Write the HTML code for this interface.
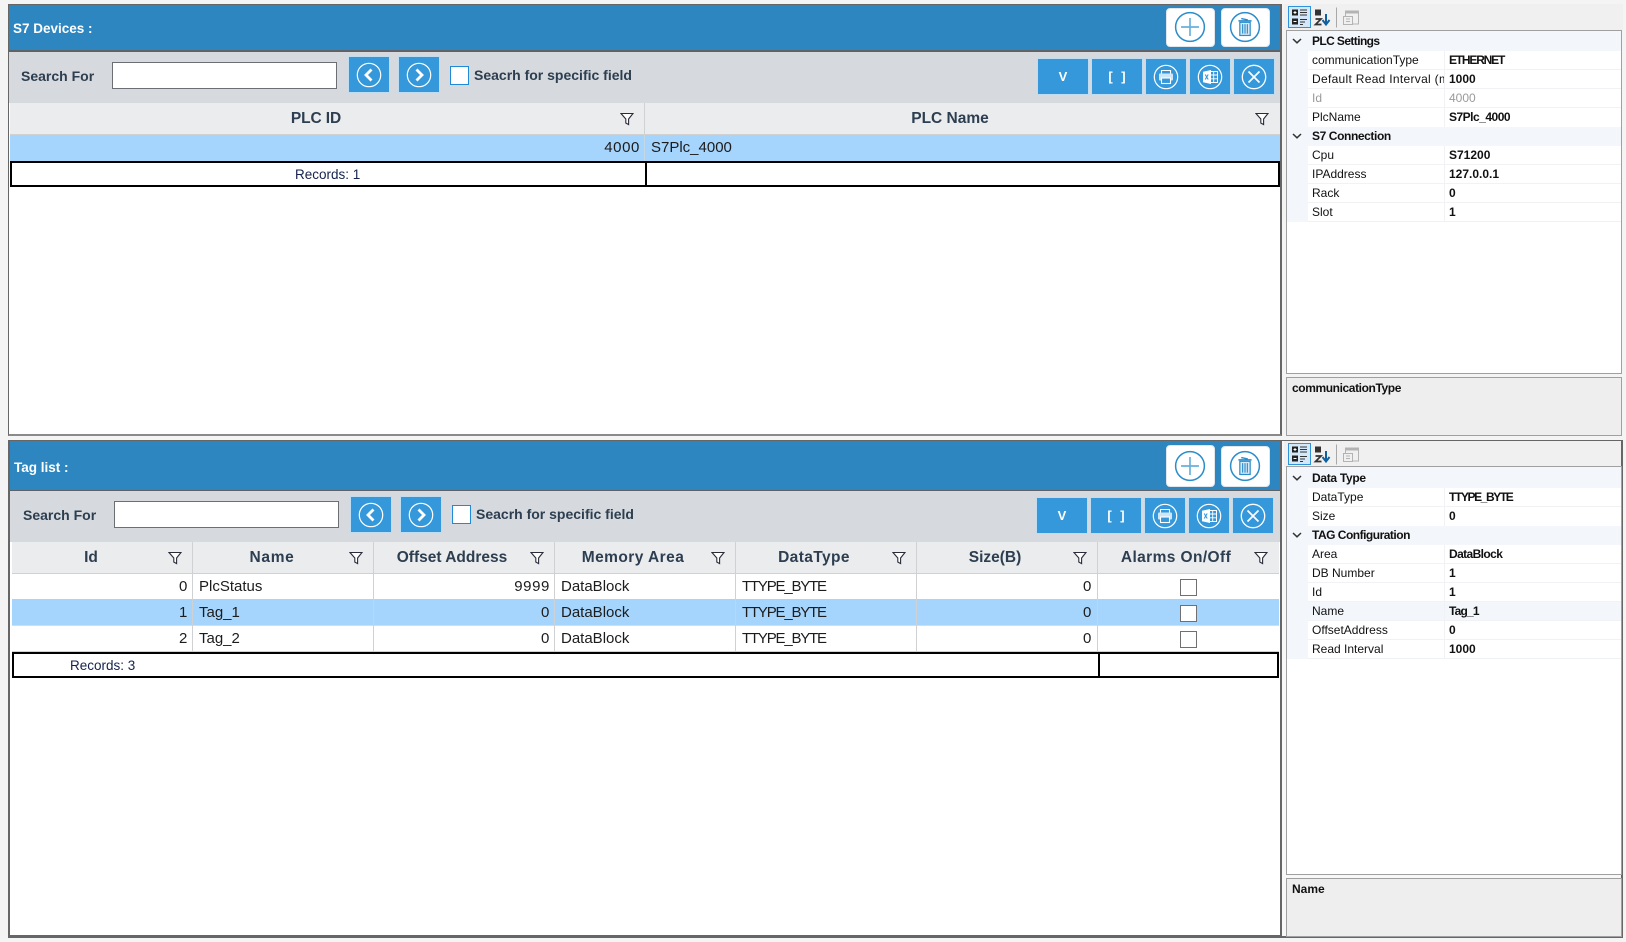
<!DOCTYPE html>
<html><head><meta charset="utf-8"><title>S7 Devices</title>
<style>
html,body{margin:0;padding:0}
body{position:relative;width:1626px;height:942px;overflow:hidden;background:#f4f4f4;font-family:"Liberation Sans",sans-serif}
div,span,svg{position:absolute;box-sizing:border-box}
.t{white-space:nowrap;line-height:20px;height:20px}
.title{color:#fff;font-weight:bold;font-size:13.5px}
.sf{color:#2c3e50;font-weight:bold;font-size:14px}
.sp{color:#2c3e50;font-weight:bold;font-size:14px}
.inp{background:#fff;border:1px solid #6b6f73}
.btn{background:#3498db;border:1px solid #3498db;outline:1px solid #c0dcf0;color:#fff;font-weight:bold;font-size:13px;text-align:center}
.cb{background:#fff;border:1px solid #1f8ad6}
.wb{background:#fff;border-radius:4px;border:1px solid #dfe6ec}
.h{background:#ebecee;height:31px}
.hs{background:#cfd1d3;width:2px}
.ht{color:#2c3e50;font-weight:bold;font-size:15.5px;transform:translateX(-50%)}
.c{color:#1c1c1c;font-size:15px}
.r{text-align:right;letter-spacing:.6px}
.f{height:24px;border:2px solid #000;background:#fff}
.rec{color:#14224e;font-size:13.5px}
.n{font-size:12px;color:#111}
.v{font-size:12px;color:#111;font-weight:bold}
.cat{font-size:12px;color:#111;font-weight:bold;letter-spacing:-.45px}
.pane{background:#fff;border:1px solid #a0a0a0}
.desc{background:#eee;border:1px solid #a0a0a0}
.gl{background:#f0f2f5;height:1px}
</style></head>
<body>
<svg width="0" height="0" style="position:absolute">
<defs>
<symbol id="fil" viewBox="0 0 14 14"><path d="M1 1.5H13L8.6 7V12.6L5.8 11V7Z" fill="#fff" stroke="#2b2b3b" stroke-width="1.1"/></symbol>
<symbol id="plus" viewBox="0 0 34 34"><circle cx="17" cy="17" r="15.3" fill="#fff" stroke="#2c8dcb" stroke-width="1.6"/><path d="M17 7.5V26.5M7.5 17H26.5" stroke="#68b1dd" stroke-width="1.8"/></symbol>
<symbol id="trash" viewBox="0 0 34 34"><circle cx="17" cy="17" r="15.3" fill="#fff" stroke="#2c8dcb" stroke-width="1.6"/><path d="M10 10.5L24 10.5M13 8L20 9.5" stroke="#2c8dcb" stroke-width="1.5" fill="none"/><rect x="11.5" y="12" width="11" height="14" fill="#d5e9f6" stroke="#2c8dcb" stroke-width="1.3"/><path d="M14.5 14V24M17 14V24M19.5 14V24" stroke="#2c8dcb" stroke-width="1.2"/></symbol>
<symbol id="prev" viewBox="0 0 26 26"><circle cx="13" cy="13" r="11.7" fill="none" stroke="#fff" stroke-width="1.2"/><path d="M15.5 7.5L10 13L15.5 18.5" fill="none" stroke="#fff" stroke-width="2.8"/></symbol>
<symbol id="next" viewBox="0 0 26 26"><circle cx="13" cy="13" r="11.7" fill="none" stroke="#fff" stroke-width="1.2"/><path d="M10.5 7.5L16 13L10.5 18.5" fill="none" stroke="#fff" stroke-width="2.8"/></symbol>
<symbol id="print" viewBox="0 0 26 26"><circle cx="13" cy="13" r="11.7" fill="none" stroke="#fff" stroke-width="1.2"/><path d="M8.5 9.5V6.5H17.5V9.5" fill="none" stroke="#fff" stroke-width="1.1"/><rect x="6" y="9.5" width="14" height="7" rx="1" fill="#cfe6f6"/><rect x="8.5" y="14" width="9" height="5.5" fill="#3498db" stroke="#fff" stroke-width="1.1"/></symbol>
<symbol id="xls" viewBox="0 0 26 26"><circle cx="13" cy="13" r="11.7" fill="none" stroke="#fff" stroke-width="1.2"/><rect x="13" y="7.5" width="7.5" height="11" fill="none" stroke="#fff" stroke-width="1"/><path d="M13 11H20.5M13 14.8H20.5M16.7 7.5V18.5" stroke="#fff" stroke-width=".9"/><path d="M6 7.8L14 6V20L6 18.2Z" fill="#fff"/><path d="M8.2 10.5L11.2 15.5M11.2 10.5L8.2 15.5" stroke="#3498db" stroke-width="1.1"/></symbol>
<symbol id="close" viewBox="0 0 26 26"><circle cx="13" cy="13" r="11.7" fill="none" stroke="#fff" stroke-width="1.3"/><path d="M7.5 7.5L18.5 18.5M18.5 7.5L7.5 18.5" stroke="#fff" stroke-width="1.7"/></symbol>
<symbol id="chev" viewBox="0 0 10 6"><path d="M1 1L5 4.8L9 1" fill="none" stroke="#333" stroke-width="1.5"/></symbol>
<symbol id="tool" viewBox="0 0 75 22">
<rect x=".5" y=".5" width="22" height="21" fill="#d5e8f9" stroke="#2f93dc"/>
<rect x="4" y="3.5" width="6" height="6" fill="#222"/><rect x="4" y="12.5" width="6" height="6" fill="#222"/>
<path d="M5.5 6.5H8.5M7 5V8M5.5 15.5H8.5" stroke="#fff" stroke-width="1"/>
<path d="M12 4H19M12 6.5H19M12 9H19M12 13.5H19M12 16H17M12 18.5H15" stroke="#333" stroke-width="1"/>
<rect x="27" y="3.5" width="6" height="6" fill="#333"/><path d="M27.5 13H33L27.5 18.5H33.5" fill="none" stroke="#333" stroke-width="1.7"/>
<path d="M38 8V18M34.5 14L38 18.5L41.5 14" fill="none" stroke="#10609f" stroke-width="2"/>
<path d="M48.5 1.5V21.5" stroke="#a8a8a8" stroke-width="1"/>
<rect x="57.5" y="5" width="13" height="13" fill="#f0f0f0" stroke="#b3b3b3"/><rect x="57" y="4.5" width="14" height="3" fill="#b3b3b3"/><rect x="55.5" y="10.5" width="9" height="8" fill="#f0f0f0" stroke="#b3b3b3"/><path d="M58 13H62M58 15.5H62" stroke="#b3b3b3"/>
</symbol>
</defs></svg>

<!-- ============ TOP LEFT PANEL ============ -->
<div style="left:8px;top:4px;width:1274px;height:432px;background:#fff;border:1px solid #666;border-right:2px solid #666;border-bottom:2px solid #8a8a8a"></div>
<div style="left:9px;top:5px;width:1271px;height:45px;background:#2e86c1"></div>
<div style="left:9px;top:50px;width:1271px;height:2px;background:#5f6266"></div>
<div class="t title" style="left:13px;top:19px">S7 Devices :</div>
<div class="wb" style="left:1166px;top:8px;width:49px;height:39px"></div>
<svg style="left:1174px;top:11px" width="32" height="32"><use href="#plus"/></svg>
<div class="wb" style="left:1221px;top:8px;width:49px;height:39px"></div>
<svg style="left:1229px;top:11px" width="32" height="32"><use href="#trash"/></svg>

<div style="left:9px;top:52px;width:1271px;height:51px;background:#d6d9dd"></div>
<div class="t sf" style="left:21px;top:66px">Search For</div>
<div class="inp" style="left:112px;top:62px;width:225px;height:27px"></div>
<div class="btn" style="left:349px;top:57px;width:40px;height:35px"><svg style="left:6px;top:4px" width="26" height="26"><use href="#prev"/></svg></div>
<div class="btn" style="left:399px;top:57px;width:40px;height:35px"><svg style="left:6px;top:4px" width="26" height="26"><use href="#next"/></svg></div>
<div class="cb" style="left:450px;top:66px;width:19px;height:19px"></div>
<div class="t sp" style="left:474px;top:65px">Seacrh for specific field</div>
<div class="btn" style="left:1038px;top:59px;width:50px;height:35px;line-height:33px">V</div>
<div class="btn" style="left:1092px;top:59px;width:50px;height:35px;line-height:33px;word-spacing:5px">[ ]</div>
<div class="btn" style="left:1146px;top:59px;width:40px;height:35px"><svg style="left:6px;top:4px" width="26" height="26"><use href="#print"/></svg></div>
<div class="btn" style="left:1190px;top:59px;width:40px;height:35px"><svg style="left:6px;top:4px" width="26" height="26"><use href="#xls"/></svg></div>
<div class="btn" style="left:1234px;top:59px;width:40px;height:35px"><svg style="left:6px;top:4px" width="26" height="26"><use href="#close"/></svg></div>

<div class="h" style="left:10px;top:103px;width:1270px"></div>
<div style="left:10px;top:134px;width:1270px;height:1px;background:#cfd1d3"></div>
<div class="hs" style="left:644px;top:103px;height:31px;width:1px"></div>
<div class="t ht" style="left:316px;top:109px;letter-spacing:-.1px">PLC ID</div>
<div class="t ht" style="left:950px;top:109px">PLC Name</div>
<svg style="left:620px;top:112px" width="14" height="14"><use href="#fil"/></svg>
<svg style="left:1255px;top:112px" width="14" height="14"><use href="#fil"/></svg>
<div style="left:10px;top:135px;width:1270px;height:26px;background:#a5d5fd"></div>
<div style="left:644px;top:135px;width:1px;height:26px;background:#c5d6e4"></div>
<div class="t c r" style="left:540px;width:100px;top:138px">4000</div>
<div class="t c" style="left:651px;top:138px">S7Plc_4000</div>
<div class="f" style="left:10px;top:161px;width:1270px;height:26px"></div>
<div style="left:645px;top:161px;width:2px;height:26px;background:#000"></div>
<div class="t rec" style="left:295px;top:165px">Records: 1</div>

<!-- ============ TOP RIGHT PANEL ============ -->
<div style="left:1284px;top:4px;width:339px;height:26px;background:#f0f0f0"></div>
<svg style="left:1288px;top:6px" width="75" height="22"><use href="#tool"/></svg>
<div class="pane" style="left:1286px;top:30px;width:336px;height:344px"></div>
<div style="left:1287px;top:31px;width:334px;height:191px;background:#f3f6fb"></div>
<div style="left:1308px;top:51px;width:313px;height:76px;background:#fff"></div>
<div style="left:1308px;top:146px;width:313px;height:76px;background:#fff"></div>
<div style="left:1444px;top:51px;width:1px;height:76px;background:#f0f2f5"></div>
<div style="left:1444px;top:146px;width:1px;height:76px;background:#f0f2f5"></div>
<div class="gl" style="left:1308px;top:69px;width:313px"></div>
<div class="gl" style="left:1308px;top:88px;width:313px"></div>
<div class="gl" style="left:1308px;top:107px;width:313px"></div>
<div class="gl" style="left:1308px;top:164px;width:313px"></div>
<div class="gl" style="left:1308px;top:183px;width:313px"></div>
<div class="gl" style="left:1308px;top:202px;width:313px"></div>
<div class="gl" style="left:1308px;top:221px;width:313px"></div>
<svg style="left:1292px;top:38px" width="10" height="6"><use href="#chev"/></svg>
<div class="t cat" style="left:1312px;top:31px;letter-spacing:-.6px">PLC Settings</div>
<div class="t n" style="left:1312px;top:50px">communicationType</div><div class="t v" style="left:1449px;top:50px;letter-spacing:-1.2px">ETHERNET</div>
<div class="t n" style="left:1312px;top:69px;width:132px;overflow:hidden;letter-spacing:.3px">Default Read Interval (ms)</div><div class="t v" style="left:1449px;top:69px">1000</div>
<div class="t n" style="left:1312px;top:88px;color:#9a9a9a">Id</div><div class="t n" style="left:1449px;top:88px;color:#9a9a9a">4000</div>
<div class="t n" style="left:1312px;top:107px">PlcName</div><div class="t v" style="left:1449px;top:107px;letter-spacing:-.5px">S7Plc_4000</div>
<svg style="left:1292px;top:133px" width="10" height="6"><use href="#chev"/></svg>
<div class="t cat" style="left:1312px;top:126px;letter-spacing:-.4px">S7 Connection</div>
<div class="t n" style="left:1312px;top:145px">Cpu</div><div class="t v" style="left:1449px;top:145px">S71200</div>
<div class="t n" style="left:1312px;top:164px">IPAddress</div><div class="t v" style="left:1449px;top:164px">127.0.0.1</div>
<div class="t n" style="left:1312px;top:183px">Rack</div><div class="t v" style="left:1449px;top:183px">0</div>
<div class="t n" style="left:1312px;top:202px">Slot</div><div class="t v" style="left:1449px;top:202px">1</div>
<div class="desc" style="left:1286px;top:377px;width:336px;height:59px"></div>
<div class="t v" style="left:1292px;top:378px;letter-spacing:-.4px">communicationType</div>

<!-- ============ BOTTOM LEFT PANEL ============ -->
<div style="left:8px;top:440px;width:1274px;height:498px;background:#fff;border:2px solid #666;border-bottom:3px solid #666"></div>
<div style="left:10px;top:441px;width:1270px;height:49px;background:#2e86c1"></div>
<div style="left:10px;top:490px;width:1270px;height:1px;background:#5f6266"></div>
<div class="t title" style="left:14px;top:458px">Tag list :</div>
<div class="wb" style="left:1166px;top:445px;width:49px;height:42px"></div>
<svg style="left:1174px;top:450px" width="32" height="32"><use href="#plus"/></svg>
<div class="wb" style="left:1221px;top:446px;width:49px;height:41px"></div>
<svg style="left:1229px;top:450px" width="32" height="32"><use href="#trash"/></svg>

<div style="left:10px;top:491px;width:1270px;height:51px;background:#d6d9dd"></div>
<div class="t sf" style="left:23px;top:505px">Search For</div>
<div class="inp" style="left:114px;top:501px;width:225px;height:27px"></div>
<div class="btn" style="left:351px;top:497px;width:40px;height:35px"><svg style="left:6px;top:4px" width="26" height="26"><use href="#prev"/></svg></div>
<div class="btn" style="left:401px;top:497px;width:40px;height:35px"><svg style="left:6px;top:4px" width="26" height="26"><use href="#next"/></svg></div>
<div class="cb" style="left:452px;top:505px;width:19px;height:19px"></div>
<div class="t sp" style="left:476px;top:504px">Seacrh for specific field</div>
<div class="btn" style="left:1037px;top:498px;width:50px;height:35px;line-height:33px">V</div>
<div class="btn" style="left:1091px;top:498px;width:50px;height:35px;line-height:33px;word-spacing:5px">[ ]</div>
<div class="btn" style="left:1145px;top:498px;width:40px;height:35px"><svg style="left:6px;top:4px" width="26" height="26"><use href="#print"/></svg></div>
<div class="btn" style="left:1189px;top:498px;width:40px;height:35px"><svg style="left:6px;top:4px" width="26" height="26"><use href="#xls"/></svg></div>
<div class="btn" style="left:1233px;top:498px;width:40px;height:35px"><svg style="left:6px;top:4px" width="26" height="26"><use href="#close"/></svg></div>

<div class="h" style="left:12px;top:542px;width:1267px"></div>
<div style="left:12px;top:573px;width:1267px;height:1px;background:#cfd1d3"></div>
<div style="left:12px;top:599px;width:1267px;height:26px;background:#a5d5fd"></div>
<div style="left:12px;top:625px;width:1267px;height:1px;background:#dcdcdc"></div>
<div style="left:12px;top:651px;width:1267px;height:1px;background:#cfd1d3"></div>
<!-- column separators -->
<div class="hs" style="left:192px;top:542px;height:109px;width:1px"></div>
<div class="hs" style="left:373px;top:542px;height:109px;width:1px"></div>
<div class="hs" style="left:554px;top:542px;height:109px;width:1px"></div>
<div class="hs" style="left:735px;top:542px;height:109px;width:1px"></div>
<div class="hs" style="left:916px;top:542px;height:109px;width:1px"></div>
<div class="hs" style="left:1097px;top:542px;height:109px;width:1px"></div>
<div class="t ht" style="left:91px;top:548px">Id</div>
<div class="t ht" style="left:272px;top:548px;letter-spacing:.7px">Name</div>
<div class="t ht" style="left:452px;top:548px">Offset Address</div>
<div class="t ht" style="left:633px;top:548px;letter-spacing:.45px">Memory Area</div>
<div class="t ht" style="left:814px;top:548px;letter-spacing:.4px">DataType</div>
<div class="t ht" style="left:995px;top:548px">Size(B)</div>
<div class="t ht" style="left:1176px;top:548px;letter-spacing:.4px">Alarms On/Off</div>
<svg style="left:168px;top:551px" width="14" height="14"><use href="#fil"/></svg>
<svg style="left:349px;top:551px" width="14" height="14"><use href="#fil"/></svg>
<svg style="left:530px;top:551px" width="14" height="14"><use href="#fil"/></svg>
<svg style="left:711px;top:551px" width="14" height="14"><use href="#fil"/></svg>
<svg style="left:892px;top:551px" width="14" height="14"><use href="#fil"/></svg>
<svg style="left:1073px;top:551px" width="14" height="14"><use href="#fil"/></svg>
<svg style="left:1254px;top:551px" width="14" height="14"><use href="#fil"/></svg>

<div class="t c r" style="left:88px;width:100px;top:577px">0</div>
<div class="t c" style="left:199px;top:577px">PlcStatus</div>
<div class="t c r" style="left:450px;width:100px;top:577px">9999</div>
<div class="t c" style="left:561px;top:577px">DataBlock</div>
<div class="t c" style="left:742px;top:577px;letter-spacing:-1.2px">TTYPE_BYTE</div>
<div class="t c r" style="left:992px;width:100px;top:577px">0</div>
<div class="t c r" style="left:88px;width:100px;top:603px">1</div>
<div class="t c" style="left:199px;top:603px">Tag_1</div>
<div class="t c r" style="left:450px;width:100px;top:603px">0</div>
<div class="t c" style="left:561px;top:603px">DataBlock</div>
<div class="t c" style="left:742px;top:603px;letter-spacing:-1.2px">TTYPE_BYTE</div>
<div class="t c r" style="left:992px;width:100px;top:603px">0</div>
<div class="t c r" style="left:88px;width:100px;top:629px">2</div>
<div class="t c" style="left:199px;top:629px">Tag_2</div>
<div class="t c r" style="left:450px;width:100px;top:629px">0</div>
<div class="t c" style="left:561px;top:629px">DataBlock</div>
<div class="t c" style="left:742px;top:629px;letter-spacing:-1.2px">TTYPE_BYTE</div>
<div class="t c r" style="left:992px;width:100px;top:629px">0</div>
<div style="left:1180px;top:579px;width:17px;height:17px;background:#fff;border:1px solid #707070"></div>
<div style="left:1180px;top:605px;width:17px;height:17px;background:#fff;border:1px solid #707070"></div>
<div style="left:1180px;top:631px;width:17px;height:17px;background:#fff;border:1px solid #707070"></div>
<div class="f" style="left:12px;top:652px;width:1267px;height:26px"></div>
<div style="left:1098px;top:652px;width:2px;height:26px;background:#000"></div>
<div class="t rec" style="left:70px;top:656px">Records: 3</div>

<!-- ============ BOTTOM RIGHT PANEL ============ -->
<div style="left:1282px;top:440px;width:341px;height:498px;background:#f8f8f8;border-top:1px solid #666;border-bottom:2px solid #666;border-right:2px solid #666"></div>
<div style="left:1284px;top:441px;width:337px;height:26px;background:#f0f0f0"></div>
<svg style="left:1288px;top:443px" width="75" height="22"><use href="#tool"/></svg>
<div class="pane" style="left:1286px;top:466px;width:336px;height:409px"></div>
<div style="left:1287px;top:467px;width:334px;height:192px;background:#f3f6fb"></div>
<div style="left:1308px;top:488px;width:313px;height:38px;background:#fff"></div>
<div style="left:1308px;top:545px;width:313px;height:114px;background:#fff"></div>
<div style="left:1308px;top:602px;width:313px;height:19px;background:#f3f6fb"></div>
<div style="left:1444px;top:488px;width:1px;height:38px;background:#f0f2f5"></div>
<div style="left:1444px;top:545px;width:1px;height:114px;background:#f0f2f5"></div>
<div class="gl" style="left:1308px;top:506px;width:313px"></div>
<div class="gl" style="left:1308px;top:563px;width:313px"></div>
<div class="gl" style="left:1308px;top:582px;width:313px"></div>
<div class="gl" style="left:1308px;top:601px;width:313px"></div>
<div class="gl" style="left:1308px;top:620px;width:313px"></div>
<div class="gl" style="left:1308px;top:639px;width:313px"></div>
<div class="gl" style="left:1308px;top:658px;width:313px"></div>
<svg style="left:1292px;top:475px" width="10" height="6"><use href="#chev"/></svg>
<div class="t cat" style="left:1312px;top:468px;letter-spacing:-.3px">Data Type</div>
<div class="t n" style="left:1312px;top:487px">DataType</div><div class="t v" style="left:1449px;top:487px;letter-spacing:-1.4px">TTYPE_BYTE</div>
<div class="t n" style="left:1312px;top:506px">Size</div><div class="t v" style="left:1449px;top:506px">0</div>
<svg style="left:1292px;top:532px" width="10" height="6"><use href="#chev"/></svg>
<div class="t cat" style="left:1312px;top:525px;letter-spacing:-.5px">TAG Configuration</div>
<div class="t n" style="left:1312px;top:544px">Area</div><div class="t v" style="left:1449px;top:544px;letter-spacing:-.6px">DataBlock</div>
<div class="t n" style="left:1312px;top:563px">DB Number</div><div class="t v" style="left:1449px;top:563px">1</div>
<div class="t n" style="left:1312px;top:582px">Id</div><div class="t v" style="left:1449px;top:582px">1</div>
<div class="t n" style="left:1312px;top:601px">Name</div><div class="t v" style="left:1449px;top:601px;letter-spacing:-.8px">Tag_1</div>
<div class="t n" style="left:1312px;top:620px">OffsetAddress</div><div class="t v" style="left:1449px;top:620px">0</div>
<div class="t n" style="left:1312px;top:639px">Read Interval</div><div class="t v" style="left:1449px;top:639px">1000</div>
<div class="desc" style="left:1286px;top:878px;width:336px;height:59px"></div>
<div class="t v" style="left:1292px;top:879px">Name</div>
</body></html>
